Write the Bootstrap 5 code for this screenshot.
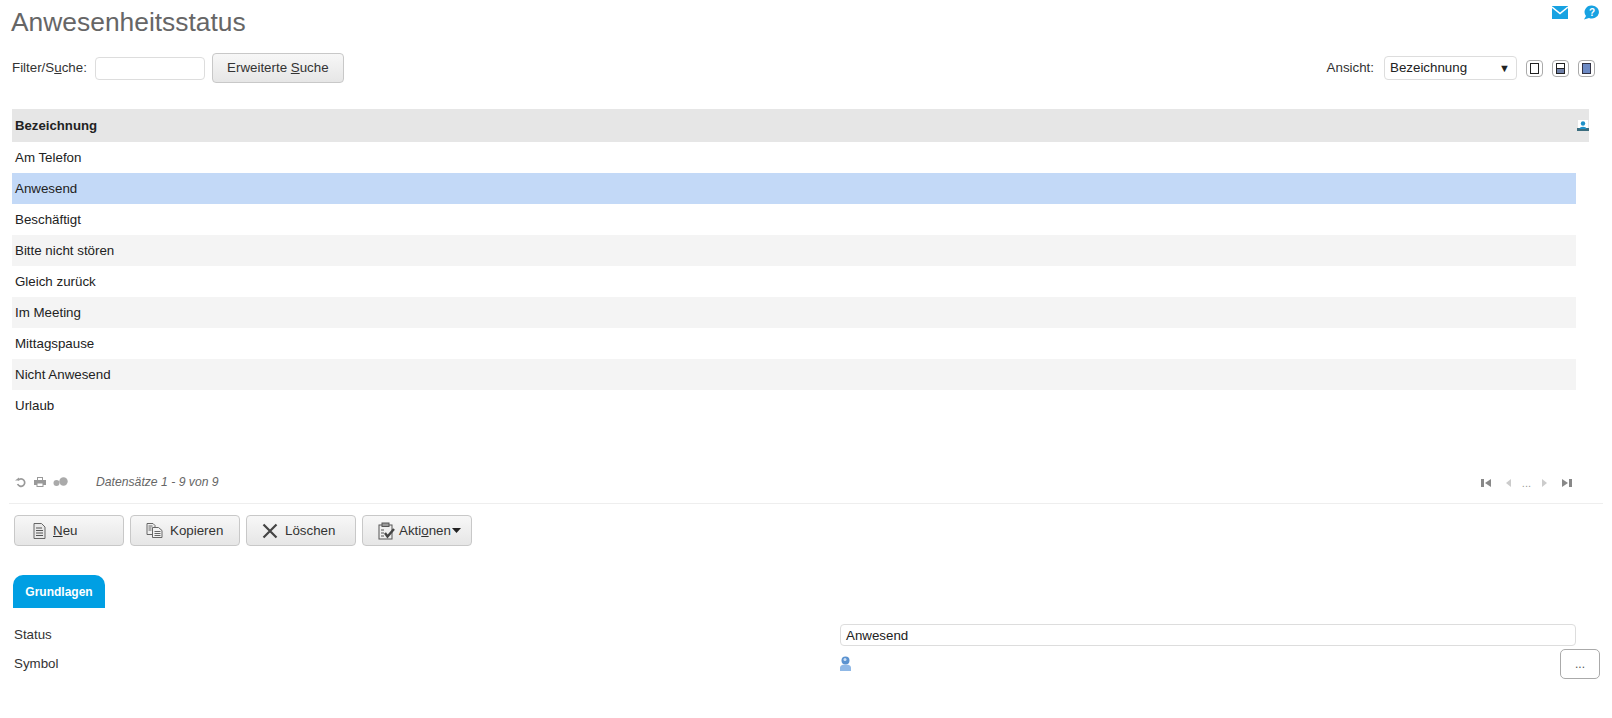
<!DOCTYPE html>
<html lang="de">
<head>
<meta charset="utf-8">
<title>Anwesenheitsstatus</title>
<link href="https://cdn.jsdelivr.net/npm/bootstrap@5.3.0/dist/css/bootstrap.min.css" rel="stylesheet">
<style>
html,body{height:718px;overflow:hidden}
body{font-family:"Liberation Sans",Arial,sans-serif;font-size:13.33px;color:#222;background:#fff}
.page-wrap{padding:0 12px;position:relative}
.page-title{font-size:26.4px;line-height:30px;color:#666;font-weight:400;margin:0;padding-top:7px;margin-left:-1px;height:53px}
.top-icons{position:absolute;right:12px;top:5px;gap:15px}
.tool-row{height:30px;padding-right:5px}
.tool-label{color:#333}
.tool-input{width:110px;height:23px;border:1px solid #ddd;border-radius:4px;background:#fff;margin-left:8px}
.grad-btn{height:31px;border:1px solid #c8c8c8;border-radius:4px;background:linear-gradient(#f7f7f7,#e6e6e6);color:#333;font-size:13.33px;padding:0;display:inline-flex;align-items:center}
.search-btn{width:132px;height:30px;margin-left:7px;justify-content:center}
.view-select{width:133px;height:24px;border:1px solid #ddd;border-radius:4px;padding:0 5px;margin-left:10px;color:#222;justify-content:space-between}
.view-select i{font-style:normal;font-size:11px;margin-right:1px}
.view-btn{width:17px;height:17px;border:1px solid #aaa;border-radius:4px;padding:2px 3px;background:#fff;margin-left:9px;display:flex}
.view-btn span{display:block;width:100%;border:1px solid #222}
.view-btn .half{background:linear-gradient(#fff 45%,#222 45%,#222 55%,#6f80a8 55%)}
.view-btn .full{background:#6d8ac4;border-color:#334}
.data-head{margin-top:26px;height:33px;background:#e6e6e6;width:1577px;font-weight:700;color:#222;padding-left:3px;font-size:13.2px}
.data-rows{width:1564px;height:279px}
.data-line{height:31px;line-height:31.5px;padding-left:3px;color:#222}
.data-line.alt{background:#f4f4f4}
.data-line.sel{background:#c3d9f7}
.pager-row{height:82px;margin-left:3px;margin-right:-3px;padding-right:31px;padding-top:41px;align-items:center;color:#666}
.pager-left{gap:7px}
.pager-right{gap:11px}
.pager-dots{color:#999;font-size:11px;line-height:8px}
.pager-info{font-style:italic;font-size:12.2px;margin-left:21px;color:#666}
.pager-row svg{display:block}
.rule{border:0;border-top:1px solid #eee;opacity:1;margin:0 -3px;width:1594px}
.action-row{margin-top:11px;margin-left:2px;gap:6px}
.act-btn{width:110px;padding-left:18px;gap:7px}
.act-btn.w2{padding-left:15px;gap:7px}
.act-btn.w3{gap:4px}
.caret-svg{margin-left:-3px}
.tab-row{margin-top:29px}
.tab-pill{width:92px;height:33px;background:#009fe3;color:#fff;font-weight:700;border-radius:10px 10px 0 0;font-size:12px;margin-left:1px}
.form-line{padding-left:2px;color:#333;position:relative}
.form-status{margin-top:16px;height:22px}
.form-symbol{margin-top:3px;height:30px}
.form-value{left:828px;top:7px;position:absolute}
.form-field{width:736px;height:22px;border:1px solid #ddd;border-radius:4px;left:828px;top:0;padding-left:5px;color:#222;line-height:21px;background:#fff;position:absolute}
.dots-btn{position:absolute;left:1548px;top:0;width:40px;height:30px;border:1px solid #aaa;border-radius:5px;background:#fff;color:#555;font-size:12px;padding:0}
.sym-lbl{line-height:22px}
.form-symbol .sym-lbl{margin-top:4px}
</style>
</head>
<body>
<div class="page-wrap">
  <h1 class="page-title">Anwesenheitsstatus</h1>
  <div class="top-icons d-flex align-items-center">
    <svg width="16" height="14" viewBox="0 0 16 14"><rect y="0" width="16" height="13" fill="#17a2e2"/><path d="M0 1 L8 7.5 L16 1" fill="none" stroke="#fff" stroke-width="1.6"/></svg>
    <svg width="17" height="15" viewBox="0 0 17 15"><path d="M9 0.5a7 6.5 0 1 1-3 12.4L1 14.5l2-3.6A7 6.5 0 0 1 9 .5z" fill="#17a2e2"/><text x="9" y="11" font-family="Liberation Sans" font-size="10" font-weight="700" fill="#fff" text-anchor="middle">?</text></svg>
  </div>

  <div class="tool-row d-flex align-items-center justify-content-between">
    <div class="d-flex align-items-center">
      <span class="tool-label">Filter/S<u>u</u>che:</span>
      <span class="tool-input"></span>
      <button type="button" class="grad-btn search-btn">Erweiterte&nbsp;<u>S</u>uche</button>
    </div>
    <div class="d-flex align-items-center">
      <span class="tool-label">Ansicht:</span>
      <span class="view-select d-flex align-items-center">Bezeichnung<i>▼</i></span>
      <span class="view-btn"><span></span></span>
      <span class="view-btn"><span class="half"></span></span>
      <span class="view-btn"><span class="full"></span></span>
    </div>
  </div>

  <div class="data-head d-flex align-items-center justify-content-between">
    <span>Bezeichnung</span>
    <svg width="12" height="11" viewBox="0 0 12 11"><rect x="0" y="8" width="12" height="3" fill="#3b6d7e"/><rect x="1" y="0" width="10" height="8" fill="#fff"/><circle cx="6" cy="3.500" r="2.200" fill="#1d90c8"/><path d="M2.500 9c0-3 7-3 7 0z" fill="#1d90c8"/></svg>
  </div>
  <div class="data-rows">
    <div class="data-line">Am Telefon</div>
    <div class="data-line sel">Anwesend</div>
    <div class="data-line">Beschäftigt</div>
    <div class="data-line alt">Bitte nicht stören</div>
    <div class="data-line">Gleich zurück</div>
    <div class="data-line alt">Im Meeting</div>
    <div class="data-line">Mittagspause</div>
    <div class="data-line alt">Nicht Anwesend</div>
    <div class="data-line">Urlaub</div>
  </div>

  <div class="pager-row d-flex justify-content-between">
    <div class="d-flex align-items-center pager-left">
      <svg width="12" height="11" viewBox="0 0 12 11"><path d="M3.200 3.200A3.700 3.700 0 1 1 2.600 7" fill="none" stroke="#999" stroke-width="1.700"/><path d="M0 3.500h4v-3z" fill="#999"/></svg>
      <svg width="12" height="10" viewBox="0 0 12 10"><path d="M3 0h6v3h3v5H9.500v2h-7V8H0V3h3z" fill="#999"/><rect x="4" y="1" width="4" height="2" fill="#fff"/><rect x="3.500" y="6.500" width="5" height="2.500" fill="#fff"/></svg>
      <svg width="15" height="10" viewBox="0 0 15 10"><circle cx="3.500" cy="6" r="3" fill="#aaa"/><circle cx="10.500" cy="4.500" r="4.200" fill="#aaa"/></svg>
      <span class="pager-info">Datensätze 1 - 9 von 9</span>
    </div>
    <div class="d-flex align-items-center pager-right">
      <svg width="10" height="8" viewBox="0 0 10 8"><rect width="3" height="8" fill="#888"/><path d="M10 0v8L4 4z" fill="#888"/></svg>
      <svg class="ms-1" width="5" height="8" viewBox="0 0 5 8"><path d="M5 0v8L0 4z" fill="#ccc"/></svg>
      <span class="pager-dots">...</span>
      <svg width="5" height="8" viewBox="0 0 5 8"><path d="M0 0v8l5-4z" fill="#ccc"/></svg>
      <svg class="ms-1" width="10" height="8" viewBox="0 0 10 8"><path d="M0 0v8l6-4z" fill="#888"/><rect x="7" width="3" height="8" fill="#888"/></svg>
    </div>
  </div>
  <hr class="rule">

  <div class="action-row d-flex">
    <button type="button" class="grad-btn act-btn">
      <svg width="13" height="16" viewBox="0 0 13 16"><path d="M1 .5h7.500L12 4v11.500H1z" fill="#e8e8e8" stroke="#666"/><path d="M3 5h6M3 7.500h7M3 10h7M3 12.500h7" stroke="#555"/></svg>
      <span><u>N</u>eu</span>
    </button>
    <button type="button" class="grad-btn act-btn w2">
      <svg width="17" height="15" viewBox="0 0 17 15"><path d="M1 .5h6l2 2v9H1z" fill="#eee" stroke="#666"/><path d="M6.500 4.500h6l3.500 3v7H6.500z" fill="#f2f2f2" stroke="#666"/><path d="M2.500 3h4M2.500 5h3M2.500 7h3M8.500 8.500h6M8.500 10.500h6M8.500 12.500h6" stroke="#666"/></svg>
      <span>Kopieren</span>
    </button>
    <button type="button" class="grad-btn act-btn w2">
      <svg width="16" height="16" viewBox="0 0 16 16"><path d="M1.500 1.500l13 13M14.500 1.500l-13 13" stroke="#444" stroke-width="2.200"/></svg>
      <span>Löschen</span>
    </button>
    <button type="button" class="grad-btn act-btn w2 w3">
      <svg width="17" height="18" viewBox="0 0 17 18"><rect x="1" y="3" width="13" height="14" fill="#eee" stroke="#555"/><rect x="4" y="1" width="7" height="3.500" fill="#999" stroke="#555"/><path d="M3 8h3M3 11h3M3 14h3" stroke="#555"/><path d="M7 11l2.500 3.500L16 7" fill="none" stroke="#444" stroke-width="2.400"/></svg>
      <span>Akti<u>o</u>nen</span><svg class="caret-svg" width="9" height="5" viewBox="0 0 9 5"><path d="M0 0h9L4.500 5z" fill="#222"/></svg>
    </button>
  </div>

  <div class="tab-row">
    <div class="tab-pill d-flex align-items-center justify-content-center">Grundlagen</div>
  </div>

  <div class="form-line form-status">
    <span class="sym-lbl">Status</span>
    <div class="form-field">Anwesend</div>
  </div>
  <div class="form-line form-symbol d-flex">
    <span class="sym-lbl">Symbol</span>
    <svg class="form-value" width="11" height="15" viewBox="0 0 11 15"><circle cx="5.500" cy="4.500" r="4" fill="#5b93d0"/><circle cx="5" cy="3.500" r="1.500" fill="#cfe0f5"/><path d="M0 15v-3c0-3 3-3.500 5.500-3.500S11 9 11 12v3z" fill="#8fb8e6"/></svg>
    <button type="button" class="dots-btn">...</button>
  </div>
</div>
<script src="https://cdn.jsdelivr.net/npm/bootstrap@5.3.0/dist/js/bootstrap.bundle.min.js"></script>
</body>
</html>
